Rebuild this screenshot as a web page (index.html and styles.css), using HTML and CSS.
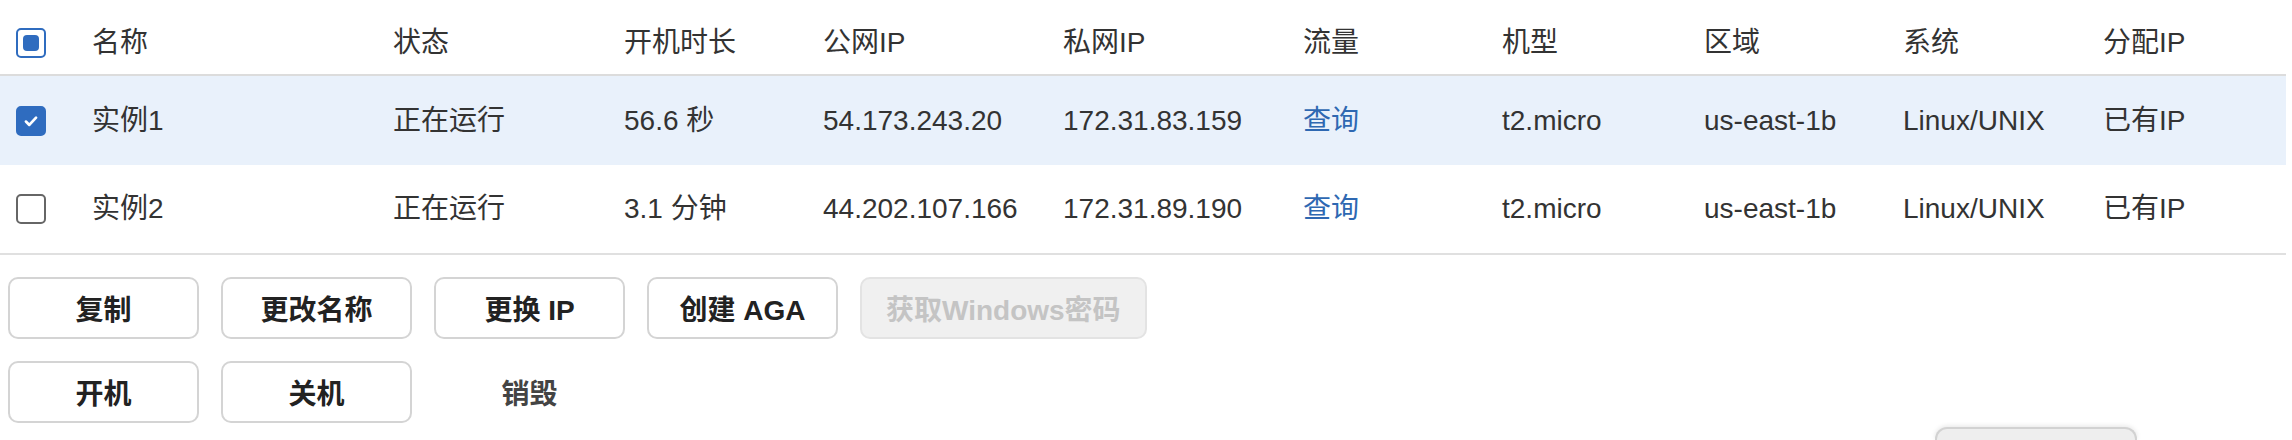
FILE: index.html
```html
<!DOCTYPE html>
<html lang="zh-CN">
<head>
    <meta charset="UTF-8">
    <meta name="viewport" content="width=device-width, initial-scale=1.0">
    <title>实例列表</title>
    <link rel="stylesheet" href="styles.css">
</head>
<body>

<div class="table">
    <div class="row head">
        <div class="cell"><span class="cb cb-mixed"></span></div>
        <div class="cell">名称</div>
        <div class="cell">状态</div>
        <div class="cell">开机时长</div>
        <div class="cell">公网IP</div>
        <div class="cell">私网IP</div>
        <div class="cell">流量</div>
        <div class="cell">机型</div>
        <div class="cell">区域</div>
        <div class="cell">系统</div>
        <div class="cell">分配IP</div>
    </div>
    <div class="row selected">
        <div class="cell">
            <span class="cb cb-checked">
                <svg viewBox="0 0 16 16" width="18" height="18"><path d="M3.5 8.5l3 3 6-6.5" fill="none" stroke="#fff" stroke-width="2.4" stroke-linecap="round" stroke-linejoin="round"/></svg>
            </span>
        </div>
        <div class="cell">实例1</div>
        <div class="cell">正在运行</div>
        <div class="cell">56.6 秒</div>
        <div class="cell">54.173.243.20</div>
        <div class="cell">172.31.83.159</div>
        <div class="cell"><a class="link" href="#">查询</a></div>
        <div class="cell">t2.micro</div>
        <div class="cell">us-east-1b</div>
        <div class="cell">Linux/UNIX</div>
        <div class="cell">已有IP</div>
    </div>
    <div class="row">
        <div class="cell"><span class="cb"></span></div>
        <div class="cell">实例2</div>
        <div class="cell">正在运行</div>
        <div class="cell">3.1 分钟</div>
        <div class="cell">44.202.107.166</div>
        <div class="cell">172.31.89.190</div>
        <div class="cell"><a class="link" href="#">查询</a></div>
        <div class="cell">t2.micro</div>
        <div class="cell">us-east-1b</div>
        <div class="cell">Linux/UNIX</div>
        <div class="cell">已有IP</div>
    </div>
</div>

<div class="actions">
    <div class="btn-row">
        <button class="btn">复制</button>
        <button class="btn">更改名称</button>
        <button class="btn">更换 IP</button>
        <button class="btn">创建 AGA</button>
        <button class="btn" disabled>获取Windows密码</button>
    </div>
    <div class="btn-row">
        <button class="btn">开机</button>
        <button class="btn">关机</button>
        <button class="btn btn-text">销毁</button>
    </div>
</div>

<div class="popup"></div>

</body>
</html>
```

FILE: styles.css
```css
html {
    overflow: hidden;
}
body {
    margin: 0;
    height: 440px;
    font-family: "Liberation Sans", "Noto Sans CJK SC", sans-serif;
    font-size: 28px;
    color: #333;
    background-color: #fff;
}
.table {
    width: 2286px;
    border-bottom: 2px solid #e0e0e0;
}
.row {
    display: grid;
    grid-template-columns: 76px 301px 231px 199px 240px 240px 199px 202px 199px 200px 199px;
    align-items: center;
    height: 89px;
}
.row.head {
    height: 76px;
    padding-top: 12px;
    box-sizing: border-box;
    border-bottom: 2px solid #dcdcdc;
}
.row.selected {
    background-color: #e9f1fb;
}
.row + .row:last-child {
    height: 88px;
}
.cell {
    padding-left: 16px;
    white-space: nowrap;
    line-height: 1;
}
.cb {
    display: flex;
    align-items: center;
    justify-content: center;
    width: 30px;
    height: 30px;
    box-sizing: border-box;
    border: 2px solid #666;
    border-radius: 5px;
    background-color: #fff;
}
.cb-mixed {
    border-color: #2f6cbf;
}
.cb-mixed::after {
    content: "";
    width: 16px;
    height: 16px;
    border-radius: 4px;
    background-color: #2f6cbf;
}
.cb-checked {
    border-color: #2f6cbf;
    background-color: #2f6cbf;
}
.link {
    color: #2e68b2;
    text-decoration: none;
}
.actions {
    padding: 22px 8px 0;
}
.btn-row {
    display: flex;
    gap: 22px;
    margin-bottom: 22px;
}
.btn-row:last-child {
    margin-bottom: 0;
}
.btn {
    min-width: 191px;
    height: 62px;
    padding: 0 24px;
    border: 2px solid #d4d4d4;
    border-radius: 10px;
    background-color: #fff;
    color: #222;
    font-family: "Liberation Sans", "Noto Sans CJK SC", sans-serif;
    font-size: 28px;
    font-weight: bold;
    cursor: pointer;
}
.btn:disabled {
    background-color: #f0f0f0;
    border-color: #e3e3e3;
    color: #c4c4c4;
    cursor: default;
}
.btn-text {
    border-color: transparent;
    background-color: transparent;
    color: #444;
}
/* bottom edge of a floating panel, cut off by the frame */
.popup {
    position: absolute;
    left: 1935px;
    top: 427px;
    width: 202px;
    height: 13px;
    box-sizing: border-box;
    background-color: #eeeeee;
    border: 2px solid #d2d2d2;
    border-bottom: none;
    border-radius: 12px 12px 0 0;
    box-shadow: 0 -1px 5px rgba(0, 0, 0, 0.1);
}
```
